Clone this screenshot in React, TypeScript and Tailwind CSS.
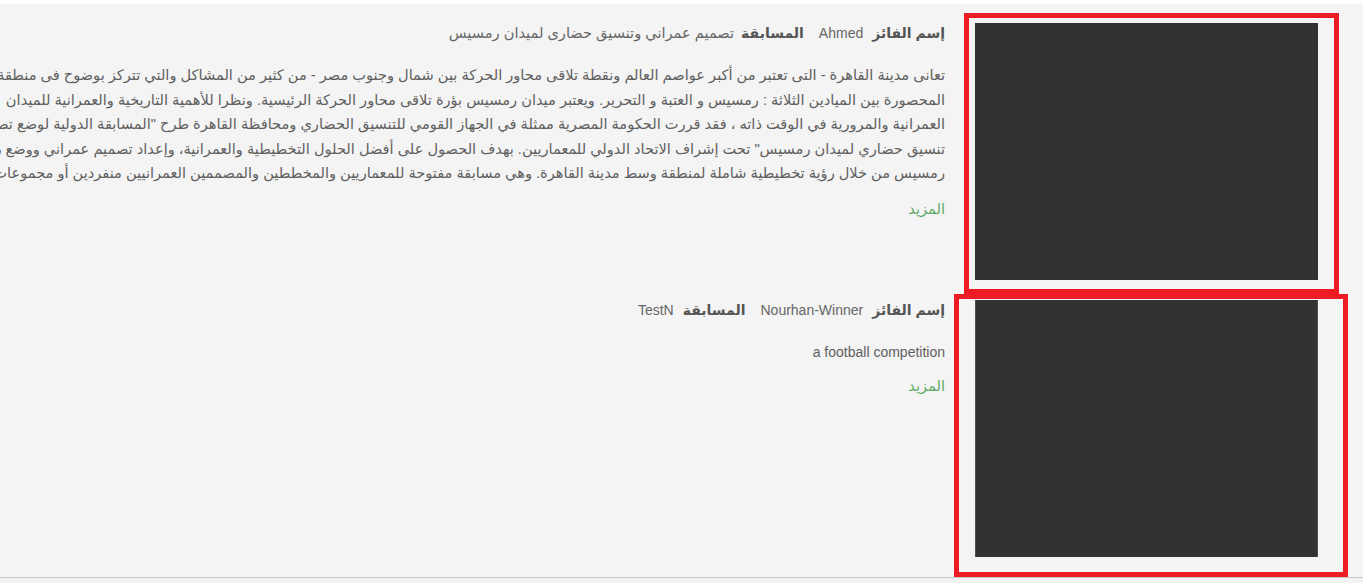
import React from "react";

const font = { fontFamily: '"Liberation Sans", "DejaVu Sans", Arial, sans-serif' };

const para1 = [
  "تعانى مدينة القاهرة - التى تعتبر من أكبر عواصم العالم ونقطة تلاقى محاور الحركة بين شمال وجنوب مصر - من كثير من المشاكل والتي تتركز بوضوح فى منطقة وسط المدينة",
  "المحصورة بين الميادين الثلاثة : رمسيس و العتبة و التحرير. ويعتبر ميدان رمسيس بؤرة تلاقى محاور الحركة الرئيسية. ونظرا للأهمية التاريخية والعمرانية للميدان",
  "العمرانية والمرورية في الوقت ذاته ، فقد قررت الحكومة المصرية ممثلة في الجهاز القومي للتنسيق الحضاري ومحافظة القاهرة طرح \"المسابقة الدولية لوضع تصميم عمراني و",
  "تنسيق حضاري لميدان رمسيس\" تحت إشراف الاتحاد الدولي للمعماريين. بهدف الحصول على أفضل الحلول التخطيطية والعمرانية، وإعداد تصميم عمراني ووضع رؤية لميدان",
  "رمسيس من خلال رؤية تخطيطية شاملة لمنطقة وسط مدينة القاهرة. وهي مسابقة مفتوحة للمعماريين والمخططين والمصممين العمرانيين منفردين أو مجموعات",
];

function Title({ winner, comp, arabicComp }: { winner: string; comp: string; arabicComp?: boolean }) {
  return (
    <div className="flex items-center whitespace-nowrap text-[14px] leading-[20px] text-[#666]">
      <span className="font-bold text-[#555]">إسم الفائز</span>
      <span className="mr-[9px]">{winner}</span>
      <span className="mr-[15px] font-bold text-[#555]">المسابقة</span>
      <span className={arabicComp ? "mr-[7px] text-[14.6px]" : "mr-[9px]"}>{comp}</span>
    </div>
  );
}

export default function App() {
  return (
    <div className="min-h-[583px] bg-[#f2f2f2]" style={font}>
      <div className="h-[4px] bg-white" />
      <div dir="rtl" className="overflow-hidden border-b border-[#c8c8c8] bg-[#f4f4f4]">
        {/* Row 1 */}
        <div className="mt-[9px] flex h-[281px]">
          <div className="mr-[24px] h-[281px] w-[375px] shrink-0 border-[5px] border-[#ed1c24] pt-[5px] pr-[16px] pb-[9px] pl-[6px]">
            <div className="h-[257px] w-[343px] bg-[#323232]" />
          </div>
          <div className="mr-[19px] min-w-0 flex-1 pt-[10px]">
            <Title winner="Ahmed" comp="تصميم عمراني وتنسيق حضارى لميدان رمسيس" arabicComp />
            <div className="mt-[20px] whitespace-nowrap text-[14.6px] leading-[24.5px] text-[#606060]">
              {para1.map((l, i) => (
                <div key={i}>{l}</div>
              ))}
            </div>
            <div className="mt-[13px] text-[14.6px] leading-[20px] text-[#5cab66]">المزيد</div>
          </div>
        </div>
        {/* Row 2 */}
        <div className="flex h-[283px]">
          <div className="mr-[15px] h-[283px] w-[394px] shrink-0 border-[5px] border-[#ed1c24] pt-[1px] pr-[25px] pb-[15px] pl-[16px]">
            <div className="h-[257px] w-[343px] border-x border-[#4e4e4e] bg-[#323232]" />
          </div>
          <div className="mr-[9px] min-w-0 flex-1 pt-[6px]">
            <Title winner="Nourhan-Winner" comp="TestN" />
            <div className="mt-[20px] whitespace-nowrap text-[14px] leading-[24.5px] text-[#606060]">
              a football competition
            </div>
            <div className="mt-[11px] text-[14.6px] leading-[20px] text-[#5cab66]">المزيد</div>
          </div>
        </div>
      </div>
    </div>
  );
}
